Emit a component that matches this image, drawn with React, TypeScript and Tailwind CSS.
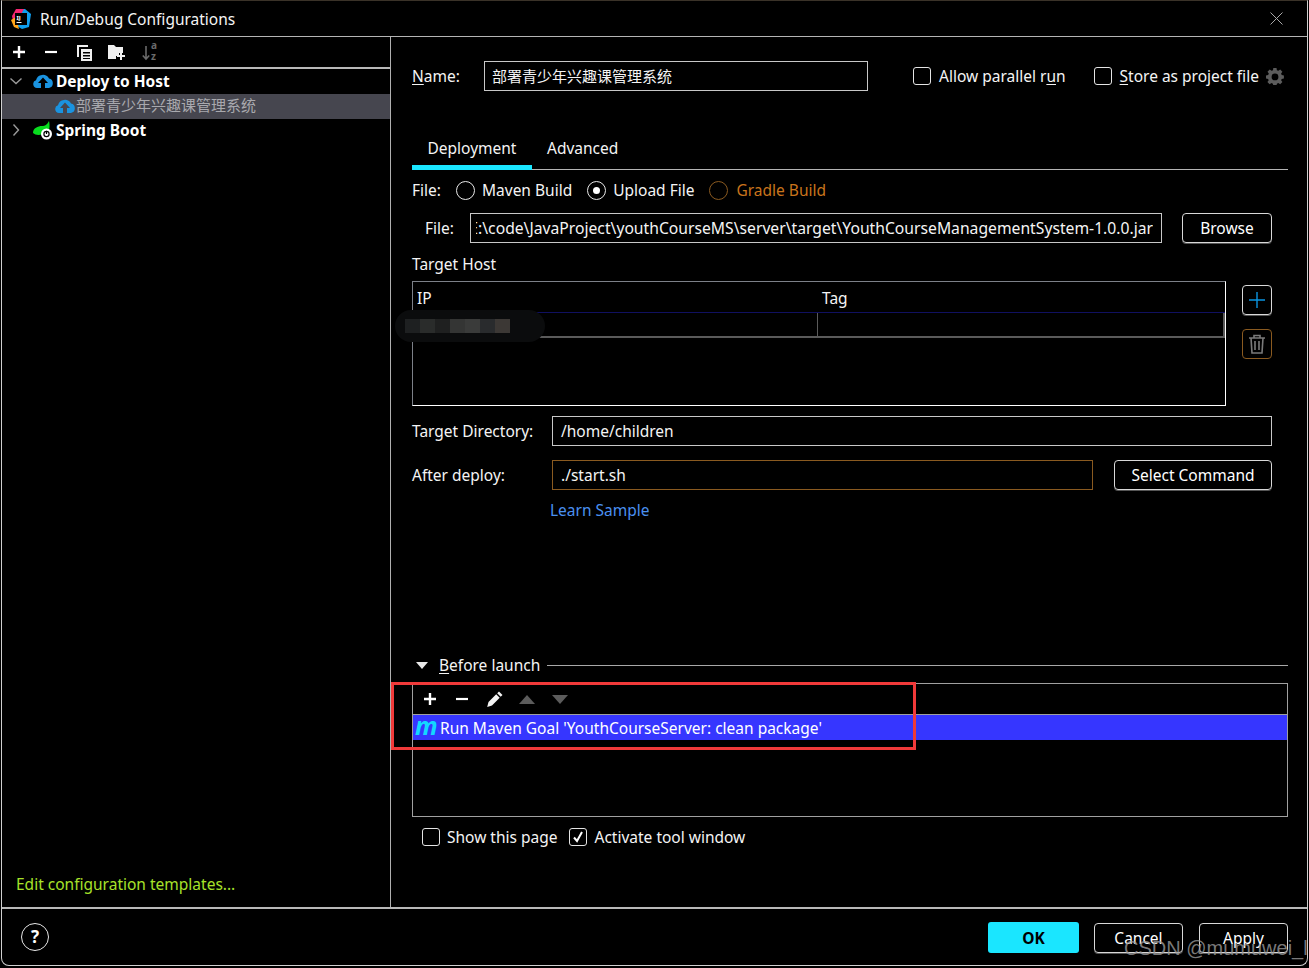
import React from 'react';

const font = "font-['Noto_Sans','Noto_Sans_CJK_SC',sans-serif]";

const Check: React.FC<{ checked?: boolean }> = ({ checked }) => (
  <span className="flex items-center justify-center w-[18px] h-[18px] rounded-[3px] border border-[#e4e4e4] shrink-0">
    {checked && (
      <svg width="14" height="14" viewBox="0 0 14 14" fill="none" stroke="#fff" strokeWidth="2">
        <path d="M3 7.5 6 11l5-9" />
      </svg>
    )}
  </span>
);

const Radio: React.FC<{ on?: boolean; orange?: boolean }> = ({ on, orange }) => (
  <span className={`flex items-center justify-center w-[19px] h-[19px] rounded-full border shrink-0 ${orange ? 'border-[#8a5a20]' : 'border-[#e8e8e8]'}`}>
    {on && <span className="w-[7px] h-[7px] rounded-full bg-white" />}
  </span>
);

const Btn: React.FC<{ className: string; children: React.ReactNode }> = ({ className, children }) => (
  <div className={`flex items-center justify-center rounded-[4px] border border-[#d8d8d8] shadow-[0_1px_0_#555] text-white ${className}`}>
    {children}
  </div>
);

const Cloud: React.FC<{ arrow: string }> = ({ arrow }) => (
  <svg width="20" height="15" viewBox="0 0 20 15">
    <path d="M4 15a4 4 0 0 1-1-7.8A7 7 0 0 1 16 5.6a4.8 4.8 0 0 1 0 9.4z" fill="#1a93e0" />
    <path d="M10 4.5 15 10h-3v5H8v-5H5z" fill={arrow} />
  </svg>
);

const Leaf: React.FC = () => (
  <svg width="20" height="19" viewBox="0 0 20 19">
    <path d="M0 12c0-5 5-7 9-7 3 0 5-1 7-5 1 5 1 10-3 12-4 2-10 3-13 0z" fill="#08dc1e" />
    <circle cx="13.5" cy="13" r="5.5" fill="#fff" />
    <circle cx="13.5" cy="13" r="2.6" fill="none" stroke="#000" strokeWidth="1.2" />
    <path d="M13.5 9.8v3.2" stroke="#000" strokeWidth="1.2" />
  </svg>
);

const Chevron: React.FC<{ open?: boolean }> = ({ open }) => (
  <svg width="12" height="12" viewBox="0 0 12 12" fill="none" stroke="#9a9a9a" strokeWidth="1.4">
    <path d={open ? 'M.5 3.5 6 8.5l5.5-5' : 'M3.5.5l5 5.5-5 5.5'} />
  </svg>
);

const Plus: React.FC = () => (
  <svg width="14" height="14" viewBox="0 0 14 14" stroke="#fff" strokeWidth="2.4">
    <path d="M7 1v12M1 7h12" />
  </svg>
);

const Minus: React.FC = () => (
  <svg width="14" height="14" viewBox="0 0 14 14" stroke="#fff" strokeWidth="2.2">
    <path d="M1 7h12" />
  </svg>
);

export default function App() {
  return (
    <div className={`relative w-[1309px] h-[968px] bg-black overflow-hidden text-[15.5px] leading-5 text-[#f4f4f4] ${font}`}>
      <div className="flex flex-col h-[966px] mx-[1px] border-x border-b border-t border-x-[#d0d0d0] border-b-[#d0d0d0] border-t-[#3a3228] rounded-b-[8px]">
        {/* title bar */}
        <div className="flex items-center h-[36px] shrink-0 pl-[9px] pr-[24px] border-b border-[#b4b4b4]">
          <svg width="20" height="20" viewBox="0 0 20 20">
            <path d="M5 0h9l6 5-2 13-7 2-7-4z" fill="#0f9ff0" />
            <path d="M1 7 5 0h8L6 12l-3 5z" fill="#f5256f" />
            <path d="M0 11l5-3 3 12-5-2z" fill="#ffa51a" />
            <rect x="4" y="4" width="12" height="12" fill="#000" />
            <text x="5.5" y="10.5" fontSize="6" fontWeight="700" fill="#fff">IJ</text>
            <rect x="5.5" y="13" width="5" height="1" fill="#fff" />
          </svg>
          <span className="ml-[9px] flex-1">Run/Debug Configurations</span>
          <svg width="13" height="13" viewBox="0 0 13 13" stroke="#a8a8a8" strokeWidth="1">
            <path d="M.5.5l12 12M12.5.5l-12 12" />
          </svg>
        </div>

        <div className="flex flex-1 min-h-0">
          {/* left side */}
          <div className="flex flex-col w-[389px] shrink-0 border-r border-[#b0b0b0]">
            <div className="flex items-center h-[32px] shrink-0 pl-[10px] border-b-2 border-[#b8b8b8]">
              <Plus />
              <span className="flex ml-[18px]"><Minus /></span>
              <svg className="ml-[18px]" width="17" height="17" viewBox="0 0 17 17" fill="#f0f0f0">
                <path d="M1 1h11v2H3v10H1z" />
                <path d="M5 5h11v12H5zm2 3v1.5h7V8zm0 3v1.5h7V11zm0 3v1h7v-1z" fillRule="evenodd" />
              </svg>
              <svg className="ml-[15px]" width="18" height="16" viewBox="0 0 18 16">
                <path d="M0 1h6l2 2h7v6h-4v3H8v3H0z" fill="#f0f0f0" />
                <path d="M13 8v8M9 12h8" stroke="#f0f0f0" strokeWidth="2" />
              </svg>
              <span className="relative block w-[17px] h-[17px] ml-[16px]">
                <svg className="absolute left-0 top-[2px]" width="8" height="15" viewBox="0 0 8 15" fill="none" stroke="#6a6a6a" strokeWidth="1.6">
                  <path d="M4 0v13M.8 9.5 4 13l3.2-3.5" />
                </svg>
                <span className="absolute left-[9px] -top-[3px] text-[10px] leading-[9px] font-bold text-[#6a6a6a]">a</span>
                <span className="absolute left-[9px] top-[8px] text-[10px] leading-[9px] font-bold text-[#6a6a6a]">z</span>
              </span>
            </div>
            <div className="flex items-center h-[25px] pl-[8px] pb-[2px] font-bold text-white">
              <Chevron open />
              <span className="ml-[11px] flex"><Cloud arrow="#000" /></span>
              <span className="ml-[3px]">Deploy to Host</span>
            </div>
            <div className="flex items-center h-[25px] pl-[53px] pb-[3px] bg-[#46464f] text-[#a9a9ae]">
              <Cloud arrow="#46464f" />
              <span className="ml-[1px] text-[15px]">部署青少年兴趣课管理系统</span>
            </div>
            <div className="flex items-center h-[25px] pl-[8px] pb-[3px] font-bold text-white">
              <Chevron />
              <span className="ml-[11px] flex"><Leaf /></span>
              <span className="ml-[3px]">Spring Boot</span>
            </div>
            <div className="mt-auto pl-[14px] pb-[13px] text-[#a7e22a]">Edit configuration templates...</div>
          </div>

          {/* right side */}
          <div className="flex flex-col flex-1 min-w-0 pl-[21px] pr-[19px]">
            <div className="flex items-center h-[30px] mt-[24px] shrink-0">
              <span className="w-[72px]"><span className="underline underline-offset-2">N</span>ame:</span>
              <div className="flex items-center w-[384px] h-[30px] pl-[7px] border border-[#c8c8c8] text-[15px]">部署青少年兴趣课管理系统</div>
              <span className="ml-[45px]"><Check /></span>
              <span className="ml-[8px]">Allow parallel r<span className="underline underline-offset-2">u</span>n</span>
              <span className="ml-[28px]"><Check /></span>
              <span className="ml-[8px]"><span className="underline underline-offset-2">S</span>tore as project file</span>
              <svg className="ml-[7px]" width="18" height="18" viewBox="0 0 18 18" fill="#5c5c5c">
                <path fillRule="evenodd" d="M7.3 1h3.2l.4 2.2 1.4.6L14.2 2.5l2.2 2.3-1.3 1.8.6 1.4 2.2.4v3.1l-2.2.4-.6 1.4 1.3 1.8-2.2 2.2-1.9-1.2-1.4.6-.4 1.9H7.3l-.4-1.9-1.4-.6-1.9 1.2-2.2-2.2 1.3-1.8-.6-1.4L0 11.5V8.4l2.2-.4.6-1.4-1.3-1.8 2.2-2.3 1.9 1.3 1.4-.6zM9 6.5a3.4 3.4 0 1 0 0 6.8 3.4 3.4 0 0 0 0-6.8z" />
              </svg>
            </div>

            {/* tabs */}
            <div className="flex h-[50px] mt-[29px] shrink-0 items-end border-b border-[#b4b4b4]">
              <div className="flex items-center justify-center w-[120px] h-[40px] border-b-[5px] border-[#1ae6ff] -mb-px">Deployment</div>
              <div className="flex items-center h-[40px] ml-[15px] border-b-[5px] border-transparent -mb-px">Advanced</div>
            </div>

            <div className="flex items-center h-[20px] mt-[10px] shrink-0">
              <span className="w-[44px]">File:</span>
              <Radio />
              <span className="ml-[7px]">Maven Build</span>
              <span className="ml-[15px]"><Radio on /></span>
              <span className="ml-[7px]">Upload File</span>
              <span className="ml-[15px]"><Radio orange /></span>
              <span className="ml-[8px] text-[#c9741c]">Gradle Build</span>
            </div>

            <div className="flex items-center h-[30px] mt-[13px] shrink-0">
              <span className="w-[58px] pl-[13px]">File:</span>
              <div className="flex items-center w-[692px] h-[30px] pl-[5px] pr-[8px] border border-[#c8c8c8]">
                <div className="flex justify-end w-full overflow-hidden whitespace-nowrap text-[15.7px]">
                  <span className="shrink-0">E:\code\JavaProject\youthCourseMS\server\target\YouthCourseManagementSystem-1.0.0.jar</span>
                </div>
              </div>
              <Btn className="w-[90px] h-[30px] ml-[20px]">Browse</Btn>
            </div>

            <div className="h-[20px] mt-[11px] shrink-0">Target Host</div>

            <div className="flex mt-[7px] shrink-0">
              <div className="flex flex-col w-[814px] h-[125px] border border-[#7c8088] border-r-white border-b-white">
                <div className="flex items-center h-[31px] shrink-0 pt-[2px] border-b border-[#101060]">
                  <span className="w-[409px] pl-[4px]">IP</span>
                  <span>Tag</span>
                </div>
                <div className="flex h-[25px] shrink-0 border-b-2 border-r-2 border-[#5a5a5a]">
                  <div className="w-[405px] border-r border-[#5a5a5a]" />
                </div>
              </div>
              <div className="flex flex-col ml-[16px] mt-[4px] gap-[14px]">
                <Btn className="w-[30px] h-[30px]">
                  <svg width="18" height="18" viewBox="0 0 18 18" stroke="#0a94e0" strokeWidth="1.4">
                    <path d="M9 1v16M1 9h16" />
                  </svg>
                </Btn>
                <div className="flex items-center justify-center w-[30px] h-[30px] rounded-[4px] border border-[#8a5a20]">
                  <svg width="18" height="20" viewBox="0 0 18 20" fill="none" stroke="#7a7a7a" strokeWidth="1.6">
                    <path d="M1 4h16M6 4V1.5h6V4M3 4l1 15h10l1-15M7 7v9M11 7v9" />
                  </svg>
                </div>
              </div>
            </div>

            <div className="flex items-center h-[30px] mt-[10px] shrink-0">
              <span className="w-[140px]">Target Directory:</span>
              <div className="flex items-center w-[720px] h-[30px] pl-[8px] border border-[#c8c8c8]">/home/children</div>
            </div>

            <div className="flex items-center h-[30px] mt-[14px] shrink-0">
              <span className="w-[140px]">After deploy:</span>
              <div className="flex items-center w-[541px] h-[30px] pl-[8px] border border-[#8a5a20]">./start.sh</div>
              <Btn className="w-[158px] h-[30px] ml-[21px]">Select Command</Btn>
            </div>

            <div className="h-[20px] mt-[10px] ml-[138px] shrink-0 text-[#4a90f0]">Learn Sample</div>

            <div className="flex items-center h-[20px] mt-[135px] pl-[4px] shrink-0">
              <svg width="12" height="7" viewBox="0 0 12 7" fill="#e8e8e8">
                <path d="M0 0h12L6 7z" />
              </svg>
              <span className="ml-[11px]"><span className="underline underline-offset-2">B</span>efore launch</span>
              <span className="flex-1 h-px ml-[7px] bg-[#a8a8a8]" />
            </div>

            <div className="flex flex-col h-[134px] mt-[8px] shrink-0 border border-[#a0a0a0]">
              <div className="flex items-center h-[31px] shrink-0 pl-[10px] border-b border-[#a0a0a0]">
                <Plus />
                <span className="ml-[18px] flex"><Minus /></span>
                <svg className="ml-[17px]" width="18" height="18" viewBox="0 0 18 18" fill="#f4f4f4">
                  <path d="M13 1.5l3.5 3.5-1.8 1.8-3.5-3.5zM10.2 4.3l3.5 3.5-7.7 7.7L1.2 17l1.3-5z" />
                </svg>
                <svg className="ml-[15px]" width="16" height="9" viewBox="0 0 16 9" fill="#5c5c5c">
                  <path d="M0 9 8 0l8 9z" />
                </svg>
                <svg className="ml-[17px]" width="16" height="9" viewBox="0 0 16 9" fill="#5c5c5c">
                  <path d="M0 0h16L8 9z" />
                </svg>
              </div>
              <div className="flex items-center h-[25px] shrink-0 pl-[2px] bg-[#3636ff] text-white">
                <span className="w-[25px] text-[25px] leading-[20px] pb-[5px] font-bold italic text-[#12d8ff]">m</span>
                <span>Run Maven Goal 'YouthCourseServer: clean package'</span>
              </div>
            </div>

            <div className="flex items-center h-[20px] mt-[10px] pl-[10px] shrink-0">
              <Check />
              <span className="ml-[7px]">Show this page</span>
              <span className="ml-[11px]"><Check checked /></span>
              <span className="ml-[8px]">Activate tool window</span>
            </div>
          </div>
        </div>

        {/* bottom bar */}
        <div className="flex items-center h-[58px] shrink-0 pl-[19px] pr-[19px] border-t-2 border-[#b8b8b8]">
          <span className="flex items-center justify-center w-[28px] h-[28px] rounded-full border border-[#e8e8e8] text-[17px] font-bold text-white">?</span>
          <div className="ml-auto flex items-center pt-[1px]">
            <div className="flex items-center justify-center w-[91px] h-[31px] rounded-[3px] bg-[#1ae6ff] font-bold text-black">OK</div>
            <Btn className="w-[89px] h-[30px] ml-[15px]">Cancel</Btn>
            <Btn className="w-[89px] h-[30px] ml-[16px]">Apply</Btn>
          </div>
        </div>
      </div>

      {/* pixelated blur over the IP cell */}
      <div className="absolute left-[395px] top-[310px] w-[150px] h-[32px] rounded-full bg-[#0b0c0d] flex items-center pl-[10px]">
        <span className="w-[15px] h-[14px] bg-[#1e2021]" />
        <span className="w-[15px] h-[14px] bg-[#2a2c2b]" />
        <span className="w-[15px] h-[14px] bg-[#1f2020]" />
        <span className="w-[15px] h-[14px] bg-[#343534]" />
        <span className="w-[15px] h-[14px] bg-[#3a3b3a]" />
        <span className="w-[15px] h-[14px] bg-[#292b2d]" />
        <span className="w-[15px] h-[14px] bg-[#3c3835]" />
      </div>

      {/* red annotation */}
      <div className="absolute left-[391px] top-[682px] w-[525px] h-[68px] border-[3px] border-[#f03a3a]" />

      {/* watermark */}
      <div className="absolute left-[1124px] top-[936px] whitespace-nowrap text-[20px] leading-6 text-[#9a9a9a]/80 font-['Liberation_Sans',sans-serif]">CSDN @mumuwei_l</div>
    </div>
  );
}
